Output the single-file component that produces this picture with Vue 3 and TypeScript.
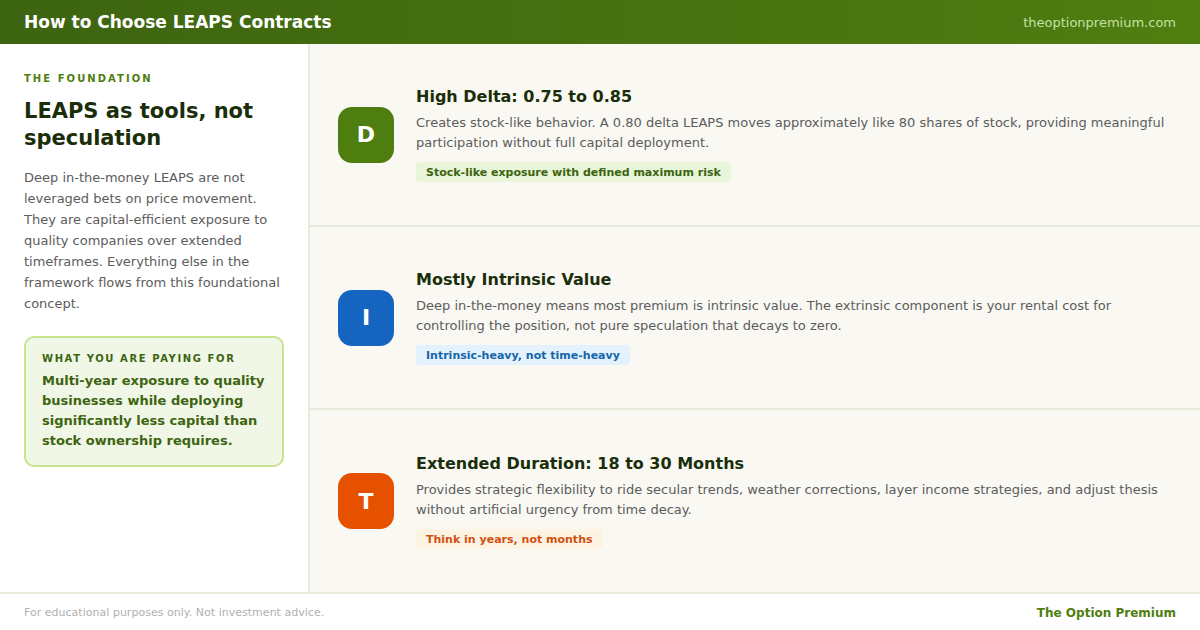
<script setup lang="ts">
interface Row { letter: string; title: string; body: string; tag: string; kind: string }
const rows: Row[] = [
  { letter: 'D', title: 'High Delta: 0.75 to 0.85', body: 'Creates stock-like behavior. A 0.80 delta LEAPS moves approximately like 80 shares of stock, providing meaningful participation without full capital deployment.', tag: 'Stock-like exposure with defined maximum risk', kind: 'green' },
  { letter: 'I', title: 'Mostly Intrinsic Value', body: 'Deep in-the-money means most premium is intrinsic value. The extrinsic component is your rental cost for controlling the position, not pure speculation that decays to zero.', tag: 'Intrinsic-heavy, not time-heavy', kind: 'blue' },
  { letter: 'T', title: 'Extended Duration: 18 to 30 Months', body: 'Provides strategic flexibility to ride secular trends, weather corrections, layer income strategies, and adjust thesis without artificial urgency from time decay.', tag: 'Think in years, not months', kind: 'orange' },
]
</script>

<template>
  <div class="page">
    <header class="top">
      <div class="top-title">How to Choose LEAPS Contracts</div>
      <div class="top-site">theoptionpremium.com</div>
    </header>
    <main class="main">
      <aside class="side">
        <div class="eyebrow">THE FOUNDATION</div>
        <h1 class="side-title">LEAPS as tools, not speculation</h1>
        <p class="side-text">Deep in-the-money LEAPS are not leveraged bets on price movement. They are capital-efficient exposure to quality companies over extended timeframes. Everything else in the framework flows from this foundational concept.</p>
        <div class="callout">
          <div class="callout-label">WHAT YOU ARE PAYING FOR</div>
          <div class="callout-text">Multi-year exposure to quality businesses while deploying significantly less capital than stock ownership requires.</div>
        </div>
      </aside>
      <section class="rows">
        <div v-for="r in rows" :key="r.letter" class="row">
          <div class="badge" :class="r.kind">{{ r.letter }}</div>
          <div class="content">
            <div class="row-title">{{ r.title }}</div>
            <div class="row-body">{{ r.body }}</div>
            <span class="tag" :class="r.kind">{{ r.tag }}</span>
          </div>
        </div>
      </section>
    </main>
    <footer class="foot">
      <div class="foot-note">For educational purposes only. Not investment advice.</div>
      <div class="foot-brand">The Option Premium</div>
    </footer>
  </div>
</template>

<style>
html, body { margin: 0; padding: 0; background: #fff; }
</style>

<style scoped>
.page {
  width: 1200px; height: 630px; display: flex; flex-direction: column; overflow: hidden;
  font-family: "DejaVu Sans", sans-serif; background: #fff;
}
.top {
  height: 44px; flex: none; display: flex; align-items: center; justify-content: space-between;
  padding: 0 24px; box-sizing: border-box;
  background: linear-gradient(90deg, #3d6410, #4f7e10);
}
.top-title { font-size: 17px; font-weight: 700; color: #fff; }
.top-site { font-size: 13px; color: #c5e1a5; }
.main { flex: 1; display: flex; min-height: 0; }
.side {
  width: 310px; flex: none; box-sizing: border-box; padding: 28px 24px 0;
  border-right: 2px solid #e8ebdc; background: #fff;
}
.eyebrow { font-size: 10px; font-weight: 700; letter-spacing: 2.05px; color: #4f7e10; line-height: 14px; margin-bottom: 12px; }
.side-title { margin: 0 0 14px; font-size: 21px; line-height: 27.3px; font-weight: 700; color: #1b2e0a; }
.side-text { margin: 0 0 22px; font-size: 13px; line-height: 21px; color: #5c5c5c; }
.callout {
  box-sizing: border-box; border: 2px solid #c9e48e; border-radius: 10px; background: #f0f7e6;
  padding: 14px 16px;
}
.callout-label { font-size: 10px; font-weight: 700; letter-spacing: 1.6px; color: #3d6410; line-height: 14px; margin-bottom: 5px; }
.callout-text { font-size: 13px; font-weight: 700; line-height: 20px; color: #3d6410; }
.rows { flex: 1; display: grid; grid-template-rows: 183px 183px 182px; background: #f9f8f3; }
.row {
  display: flex; align-items: center; gap: 22px; padding: 0 28px; box-sizing: border-box;
  border-bottom: 2px solid #e8ebdc;
}
.row:last-child { border-bottom: none; }
.badge {
  width: 56px; height: 56px; flex: none; border-radius: 14px; display: flex; align-items: center; justify-content: center;
  color: #fff; font-size: 22px; font-weight: 700;
}
.badge.green { background: #4f7e10; }
.badge.blue { background: #1565c0; }
.badge.orange { background: #e65100; }
.content { flex: 1; min-width: 0; }
.row-title { font-size: 16px; font-weight: 700; color: #1b2e0a; line-height: 19px; margin-bottom: 7px; }
.row-body { font-size: 13px; line-height: 20px; color: #5c5c5c; margin-bottom: 9px; }
.tag { display: block; width: fit-content; font-size: 11px; font-weight: 700; line-height: 18px; padding: 2px 10px 0; border-radius: 4px; }
.tag.green { background: #e8f5d8; color: #3d6410; }
.tag.blue { background: #e3f2fd; color: #1565a8; }
.tag.orange { background: #fdf3e3; color: #d05010; }
.foot {
  height: 38px; flex: none; box-sizing: border-box; display: flex; align-items: center; justify-content: space-between;
  padding: 0 24px; border-top: 2px solid #e8ebdc; background: #fff;
}
.foot-note { font-size: 11px; color: #b0b0b0; letter-spacing: 0.02px; }
.foot-brand { font-size: 12px; font-weight: 700; color: #4f7e10; padding-top: 2px; }
</style>
